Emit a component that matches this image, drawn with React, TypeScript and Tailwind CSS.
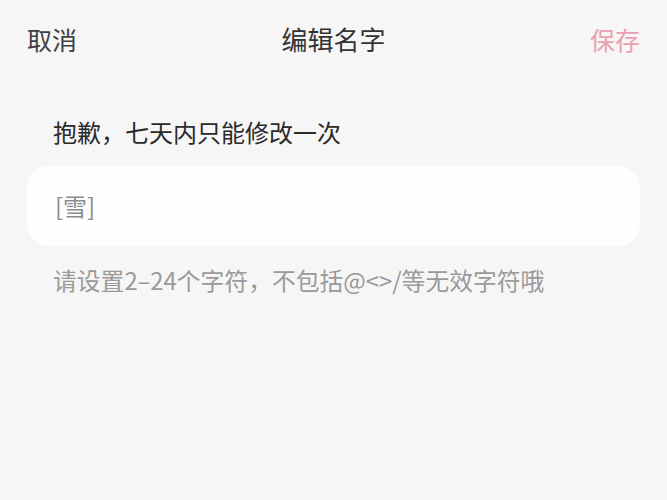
export default function App() {
  return (
    <div
      className="min-h-[500px] w-full bg-[#f6f6f6]"
      style={{ fontFamily: '"Noto Sans CJK SC", "Noto Sans", sans-serif' }}
    >
      {/* top bar */}
      <header className="flex h-[78px] items-center justify-between px-[27px]">
        <button className="w-[80px] text-left text-[25px] leading-none text-[#404040]">取消</button>
        <h1 className="text-[26px] leading-none text-[#333]">编辑名字</h1>
        <button className="w-[80px] text-right text-[25px] leading-none text-[#eaa1b0]">保存</button>
      </header>

      <main className="px-[27px]">
        <p className="mt-[38px] pl-[26px] text-[24px] leading-[32px] text-[#2a2a2a]">
          抱歉，七天内只能修改一次
        </p>

        <div className="mt-[18px] flex h-[80px] items-center rounded-[22px] bg-[#fefefe] px-[28px]">
          <span className="text-[24px] text-[#8c8c8c]">[雪]</span>
        </div>

        <p className="mt-[18px] pl-[26px] text-[23.8px] leading-[32px] text-[#9a9a9a]">
          请设置2–24个字符，不包括@&lt;&gt;/等无效字符哦
        </p>
      </main>
    </div>
  );
}
